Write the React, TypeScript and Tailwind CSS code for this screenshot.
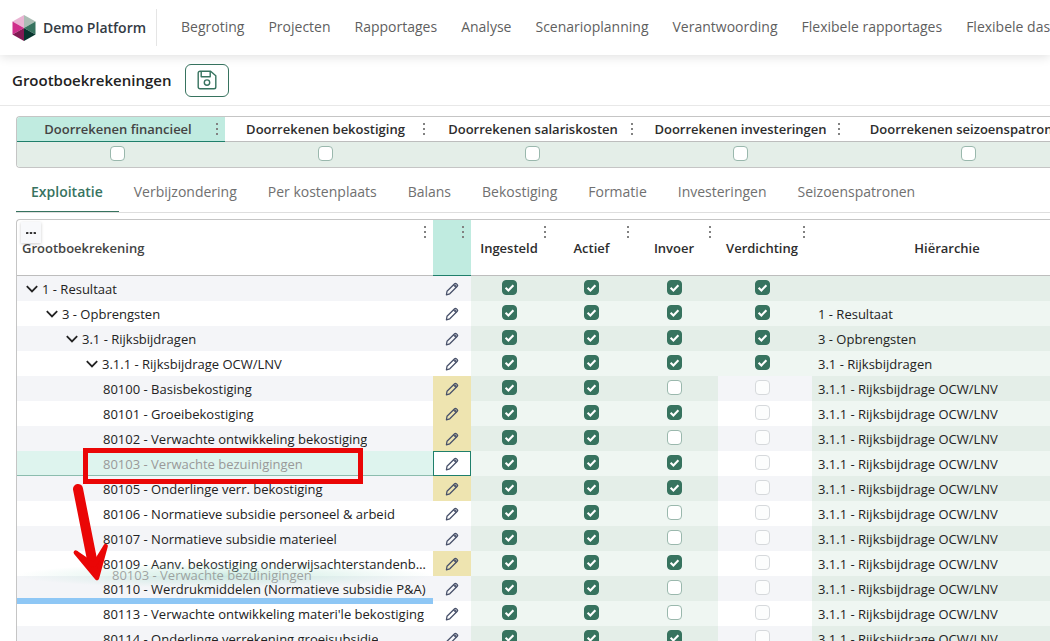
import { useState } from 'react';
import clsx from 'clsx';

const navItems = [
  'Begroting',
  'Projecten',
  'Rapportages',
  'Analyse',
  'Scenarioplanning',
  'Verantwoording',
  'Flexibele rapportages',
  'Flexibele dashboards',
];

const settings = [
  'Doorrekenen financieel',
  'Doorrekenen bekostiging',
  'Doorrekenen salariskosten',
  'Doorrekenen investeringen',
  'Doorrekenen seizoenspatronen',
];

const tabs = [
  'Exploitatie',
  'Verbijzondering',
  'Per kostenplaats',
  'Balans',
  'Bekostiging',
  'Formatie',
  'Investeringen',
  'Seizoenspatronen',
];

type Row = {
  label: string;
  level: number;
  parent: string;
  group?: boolean;
  edited?: boolean;
  input?: boolean;
  dragging?: boolean;
};

const OCW = '3.1.1 - Rijksbijdrage OCW/LNV';

const rows: Row[] = [
  { label: '1 - Resultaat', level: 0, parent: '', group: true, input: true },
  { label: '3 - Opbrengsten', level: 1, parent: '1 - Resultaat', group: true, input: true },
  { label: '3.1 - Rijksbijdragen', level: 2, parent: '3 - Opbrengsten', group: true, input: true },
  { label: OCW, level: 3, parent: '3.1 - Rijksbijdragen', group: true, input: true },
  { label: '80100 - Basisbekostiging', level: 3, parent: OCW, edited: true },
  { label: '80101 - Groeibekostiging', level: 3, parent: OCW, edited: true, input: true },
  { label: '80102 - Verwachte ontwikkeling bekostiging', level: 3, parent: OCW, edited: true },
  { label: '80103 - Verwachte bezuinigingen', level: 3, parent: OCW, input: true, dragging: true },
  { label: '80105 - Onderlinge verr. bekostiging', level: 3, parent: OCW, edited: true, input: true },
  { label: '80106 - Normatieve subsidie personeel & arbeid', level: 3, parent: OCW },
  { label: '80107 - Normatieve subsidie materieel', level: 3, parent: OCW },
  { label: '80109 - Aanv. bekostiging onderwijsachterstandenbeleid', level: 3, parent: OCW, edited: true, input: true },
  { label: '80110 - Werdrukmiddelen (Normatieve subsidie P&A)', level: 3, parent: OCW },
  { label: "80113 - Verwachte ontwikkeling materi'le bekostiging", level: 3, parent: OCW },
  { label: '80114 - Onderlinge verrekening groeisubsidie', level: 3, parent: OCW, input: true },
];

const indent = ['pl-[9px]', 'pl-[29px]', 'pl-[49px]', 'pl-[69px]'];

function Logo() {
  return (
    <svg className="w-6 h-[26px] shrink-0" viewBox="0 0 24 26" aria-hidden="true">
      <path d="M12 0 0.5 6.5 12 13z" fill="#e9b4d3" />
      <path d="M12 0 23.5 6.5 12 13z" fill="#abbdb4" />
      <path d="M0.5 6.5 12 13 0.5 19.5z" fill="#cf2d8b" />
      <path d="M23.5 6.5 12 13 23.5 19.5z" fill="#37735f" />
      <path d="M0.5 19.5 12 13V26z" fill="#821a54" />
      <path d="M23.5 19.5 12 13V26z" fill="#08362f" />
    </svg>
  );
}

function SaveIcon() {
  return (
    <svg className="size-5" viewBox="0 0 20 20" fill="none" stroke="currentColor" strokeWidth="1.4" strokeLinejoin="round">
      <path d="M3 1.2h10.6l5.2 4.6V17a1.8 1.8 0 0 1-1.8 1.8H3A1.8 1.8 0 0 1 1.2 17V3A1.8 1.8 0 0 1 3 1.2z" />
      <path d="M4.2 1.4v5.4h9V1.4" />
      <circle cx="10" cy="12.6" r="2.7" />
    </svg>
  );
}

function PencilIcon() {
  return (
    <svg className="size-[14px]" viewBox="0 0 14 14" fill="none" stroke="#475069" strokeWidth="1.25" strokeLinejoin="round">
      <path d="M1.4 12.8 2 9.3 9.6 1.7c.5-.5 1.2-.4 1.7 0l1 .9c.5.5.5 1.1 0 1.6L4.8 11.8z" />
      <path d="M8.4 2.9 11.2 5.5" />
      <path d="M9.8 2.6 11.4 4.1" />
    </svg>
  );
}

function Chevron() {
  return (
    <svg className="w-3 h-2 shrink-0" viewBox="0 0 12 8" fill="none" stroke="#222" strokeWidth="1.8">
      <path d="M0.8 1.2 6 6.4 11.2 1.2" />
    </svg>
  );
}

function Kebab({ className }: { className?: string }) {
  return (
    <button type="button" aria-label="Kolommenu" className={clsx('absolute right-[7px]', className)}>
      <svg className="w-[2px] h-3" viewBox="0 0 2 12" fill="#828282">
        <rect width="2" height="2" />
        <rect y="5" width="2" height="2" />
        <rect y="10" width="2" height="2" />
      </svg>
    </button>
  );
}

function Checkbox({ label, checked, disabled }: { label: string; checked?: boolean; disabled?: boolean }) {
  return (
    <span className="relative block size-[15px] mx-auto">
      <input
        type="checkbox"
        aria-label={label}
        defaultChecked={checked}
        disabled={disabled}
        className="peer block size-[15px] appearance-none rounded-[4px] border border-[#9ab8ad] bg-white checked:border-[#37735f] checked:bg-[#37735f] disabled:border-[#d6d9dc] disabled:bg-[#fcfdfd]"
      />
      <svg
        className="pointer-events-none absolute inset-0 hidden size-[15px] peer-checked:block"
        viewBox="0 0 15 15"
        fill="none"
        stroke="white"
        strokeWidth="2.1"
      >
        <path d="M3.6 7.7 6.4 10.4 11.4 5.2" />
      </svg>
    </span>
  );
}

function Header() {
  return (
    <header className="relative flex h-[55px] shrink-0 items-center bg-white pl-3 shadow-[0_2px_10px_rgba(0,0,0,0.12)]">
      <a href="#" className="flex h-[37px] shrink-0 items-center gap-[7px] border-r border-[#e5e5e5] pr-[10px] text-sm font-semibold text-[#333b44]">
        <Logo />
        Demo Platform
      </a>
      <nav className="ml-6 flex gap-6 pb-px whitespace-nowrap text-sm text-[#5f5f5f]">
        {navItems.map((item) => (
          <a key={item} href="#">
            {item}
          </a>
        ))}
      </nav>
    </header>
  );
}

function SettingsGrid() {
  return (
    <div className="overflow-hidden rounded-l border border-r-0 border-[#c5c5c5]">
      <table className="w-full min-w-[1080px] table-fixed border-separate border-spacing-0 text-[13px]">
        <colgroup>
          <col className="w-[208px]" />
          <col className="w-[207px]" />
          <col className="w-[208px]" />
          <col className="w-[207px]" />
          <col />
        </colgroup>
        <thead>
          <tr className="h-[25px]">
            {settings.map((name, i) => (
              <th
                key={name}
                className={clsx(
                  'relative border-b p-0 pt-[2px] pr-[6px] font-semibold whitespace-nowrap',
                  i === 0 ? 'border-[#1f7f6b] bg-[#c0ebe0] text-[#444]' : 'border-[#bdbdbd] text-[#2d2d2d]'
                )}
              >
                {name}
                <Kebab className="top-[6px]" />
              </th>
            ))}
          </tr>
        </thead>
        <tbody>
          <tr className="h-[25px] bg-[#e4eee8]">
            {settings.map((name) => (
              <td key={name} className="p-0 pr-[7px] pb-[2px] align-middle">
                <Checkbox label={name} />
              </td>
            ))}
          </tr>
        </tbody>
      </table>
    </div>
  );
}

function Tabs() {
  const [active, setActive] = useState('Exploitatie');

  return (
    <div role="tablist" className="mt-[5px] flex h-10 whitespace-nowrap border-b border-[#dedede] text-sm">
      {tabs.map((tab) => (
        <button
          key={tab}
          type="button"
          role="tab"
          aria-selected={tab === active}
          onClick={() => setActive(tab)}
          className={clsx(
            'border-b pr-4 pl-[15px]',
            tab === active ? 'border-[#37735f] font-semibold text-[#37735f]' : 'border-transparent text-[#707070]'
          )}
        >
          {tab}
        </button>
      ))}
    </div>
  );
}

function LedgerRow({ row, odd }: { row: Row; odd: boolean }) {
  const plain = odd ? 'bg-[#f4f5f8]' : 'bg-white';
  const green = odd ? 'bg-[#e4eee8]' : 'bg-[#eff6f2]';
  const box = 'p-0 pr-[6px] pb-[2px] align-middle';

  return (
    <tr className="h-[25px]">
      <td
        className={clsx(
          'p-0 pr-1',
          indent[row.level],
          row.dragging ? 'bg-[#def4ee] text-[#999] shadow-[inset_0_-1px_0_#8bbcae]' : [plain, 'text-[#222]']
        )}
      >
        <div className={clsx('flex items-center gap-1', !row.group && 'pl-[17px]')}>
          {row.group && <Chevron />}
          <span className="truncate leading-[20px]">{row.label}</span>
        </div>
      </td>
      <td
        className={clsx(
          'p-0 align-middle',
          row.dragging ? 'bg-white shadow-[inset_0_0_0_1px_#1f7f6b]' : row.edited ? 'bg-[#eee4b0]' : plain
        )}
      >
        <button type="button" aria-label={`${row.label} bewerken`} className="mx-auto block">
          <PencilIcon />
        </button>
      </td>
      <td className={clsx(box, green)}>
        <Checkbox label={`${row.label} ingesteld`} checked />
      </td>
      <td className={clsx(box, green)}>
        <Checkbox label={`${row.label} actief`} checked />
      </td>
      <td className={clsx(box, green)}>
        <Checkbox label={`${row.label} invoer`} checked={row.input} />
      </td>
      <td className={clsx(box, row.group ? green : plain)}>
        <Checkbox label={`${row.label} verdichting`} checked={row.group} disabled={!row.group} />
      </td>
      <td className={clsx('p-0 pl-[6px] text-[#222]', green)}>
        <div className="leading-[20px] whitespace-nowrap">{row.parent}</div>
      </td>
    </tr>
  );
}

function LedgerGrid() {
  const headCell = 'relative border-b border-[#bdbdbd] p-0 pt-[2px] pr-[6px] font-semibold text-[#2d2d2d]';

  return (
    <div className="relative mt-[6px] overflow-hidden rounded-tl border-t border-l border-[#c5c5c5]">
      <table className="w-full min-w-[1071px] table-fixed border-separate border-spacing-0 text-[13px]">
        <colgroup>
          <col className="w-[416px]" />
          <col className="w-[38px]" />
          <col className="w-[82px]" />
          <col className="w-[83px]" />
          <col className="w-[82px]" />
          <col className="w-[94px]" />
          <col />
        </colgroup>
        <thead>
          <tr className="h-14">
            <th className="relative border-b border-[#bdbdbd] p-0 pt-[2px] pl-[5px] text-left font-semibold text-[#444]">
              <button
                type="button"
                aria-label="Meer opties"
                className="absolute top-[2px] left-1 flex h-[21px] w-5 items-center justify-center bg-[#f8f9fb] shadow-[0_1px_3px_rgba(0,0,0,0.2)]"
              >
                <svg className="w-[10px] h-[2px]" viewBox="0 0 10 2" fill="#333">
                  <rect width="2.4" height="2" rx="0.6" />
                  <rect x="3.8" width="2.4" height="2" rx="0.6" />
                  <rect x="7.6" width="2.4" height="2" rx="0.6" />
                </svg>
              </button>
              <span className="relative">Grootboekrekening</span>
              <Kebab className="top-[6px]" />
            </th>
            <th className="relative border-b border-[#1f7f6b] bg-[#c0ebe0] p-0">
              <Kebab className="top-[6px]" />
            </th>
            {['Ingesteld', 'Actief', 'Invoer', 'Verdichting', 'Hiërarchie'].map((name) => (
              <th key={name} className={headCell}>
                {name}
                <Kebab className="top-[6px]" />
              </th>
            ))}
          </tr>
        </thead>
        <tbody>
          {rows.map((row, i) => (
            <LedgerRow key={row.label} row={row} odd={i % 2 === 0} />
          ))}
        </tbody>
      </table>

      {/* Drop position */}
      <div className="pointer-events-none absolute top-[378px] left-0 h-[6px] w-[416px] bg-[#8ec7f5]" />

      <div className="pointer-events-none absolute top-[343px] left-0 flex h-[25px] w-[416px] items-center bg-[radial-gradient(closest-side,rgba(150,215,195,0.45),transparent)] pl-[95px] text-[13px] text-[#888]/75">
        80103 - Verwachte bezuinigingen
      </div>

      {/* Annotation */}
      <div className="pointer-events-none absolute top-[228px] left-[66px] h-9 w-[280px] border-[5px] border-[#ea0606]" />
      <svg
        className="pointer-events-none absolute top-[262px] left-[53px] h-[102px] w-[42px]"
        viewBox="0 0 42 102"
        fill="#ea0606"
        stroke="#ea0606"
        strokeLinejoin="round"
        strokeLinecap="round"
      >
        <path d="M8 7 22.5 80" strokeWidth="10" fill="none" />
        <path d="M5.8 70.5 27 96 35.7 64 24 83z" strokeWidth="4.4" />
      </svg>
    </div>
  );
}

export default function App() {
  return (
    <div className="flex h-screen flex-col overflow-hidden bg-white font-['Open_Sans','Noto_Sans',sans-serif]">
      <Header />
      <div className="flex h-[51px] shrink-0 items-center gap-[14px] border-b border-[#e8e8e8] pl-3">
        <h1 className="text-[15px] font-semibold text-[#222]">Grootboekrekeningen</h1>
        <button
          type="button"
          aria-label="Opslaan"
          className="flex h-[33px] w-11 items-center justify-center rounded-md border border-[#37735f] text-[#37735f]"
        >
          <SaveIcon />
        </button>
      </div>
      <main className="min-h-0 flex-1 pt-[10px] pl-4">
        <SettingsGrid />
        <Tabs />
        <LedgerGrid />
      </main>
    </div>
  );
}
